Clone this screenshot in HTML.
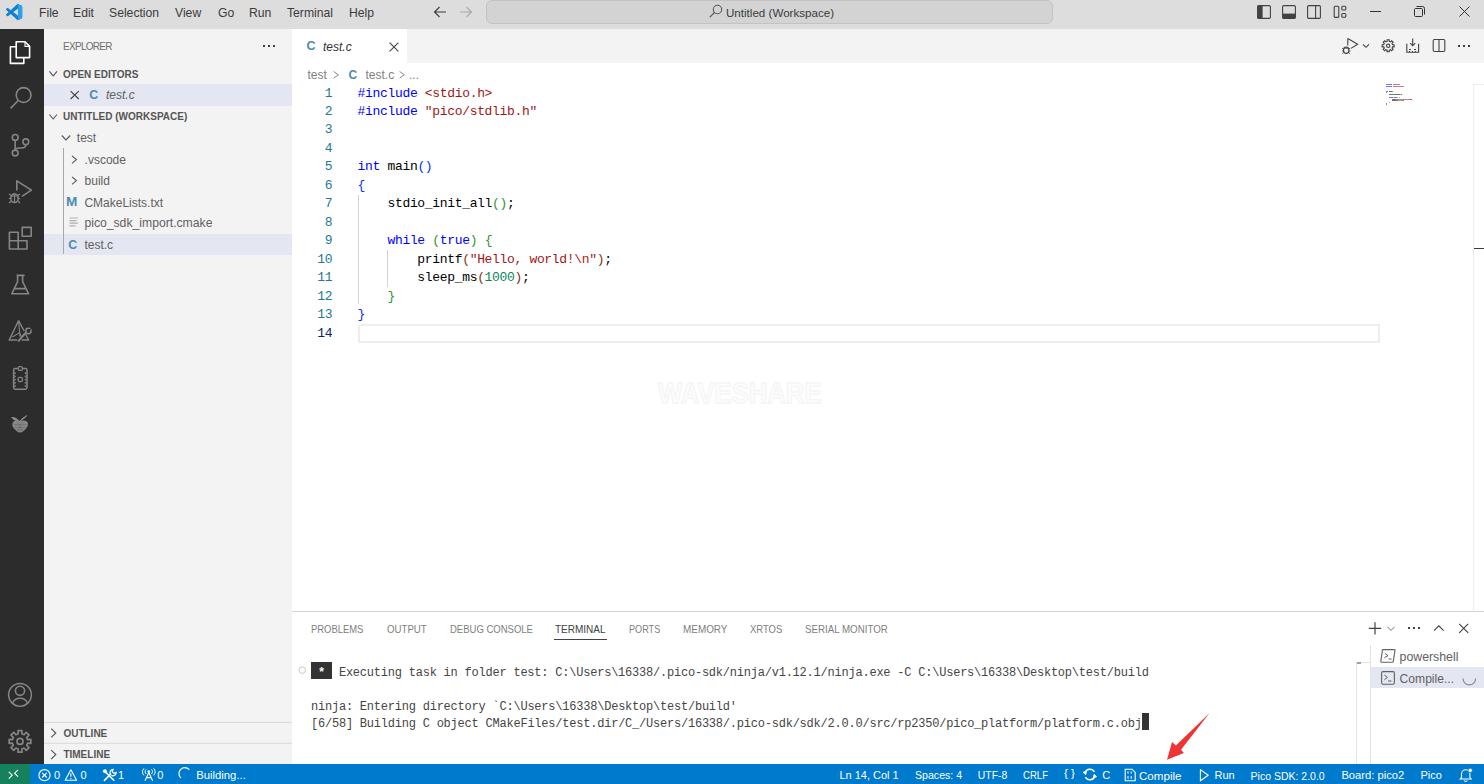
<!DOCTYPE html>
<html><head><meta charset="utf-8">
<style>
*{margin:0;padding:0;box-sizing:border-box}
html,body{width:1484px;height:784px;overflow:hidden;background:#fff;font-family:"Liberation Sans",sans-serif;position:relative}
.a{position:absolute}
.t{position:absolute;white-space:pre;line-height:1}
svg{position:absolute;overflow:visible}
.code{position:absolute;font-family:"Liberation Mono",monospace;white-space:pre;color:#000;line-height:1}
.kw{color:#0000ff}.str{color:#a31515}.num{color:#098658}.esc{color:#b01818}
.b1{color:#0431fa}.b2{color:#319331}.b3{color:#7b3814}
</style></head><body>
<div class="a" style="left:0;top:0;width:1484px;height:29px;background:#dddddd"></div>
<svg style="left:6px;top:4px" width="16.2" height="16.2" viewBox="0 0 100 100">
 <path d="M96.46 10.8L75.86.87a6.3 6.3 0 0 0-7.18 1.22L29.2 38.04 12.02 25a4.2 4.2 0 0 0-5.36.24L1.15 30.25a4.2 4.2 0 0 0 0 6.22L16.05 50 1.15 63.53a4.2 4.2 0 0 0 0 6.22l5.51 5.01a4.2 4.2 0 0 0 5.36.24l17.18-13.04 39.48 35.96a6.3 6.3 0 0 0 7.18 1.22l20.6-9.92A6.3 6.3 0 0 0 100 83.55V16.45a6.3 6.3 0 0 0-3.54-5.65zM75.02 72.7L45.11 50l29.91-22.7z" fill="#127fd0"/>
 <path d="M74.6 1.2L96.46 10.8a6.3 6.3 0 0 1 3.54 5.65V83.55a6.3 6.3 0 0 1-3.54 5.65L74.6 98.8Z" fill="#28a4ee"/>
</svg>
<div class="t" style="left:39px;top:6.87px;font-size:12.2px;color:#3b3b3b">File</div>
<div class="t" style="left:73px;top:6.87px;font-size:12.2px;color:#3b3b3b">Edit</div>
<div class="t" style="left:109px;top:6.87px;font-size:12.2px;color:#3b3b3b">Selection</div>
<div class="t" style="left:175px;top:6.87px;font-size:12.2px;color:#3b3b3b">View</div>
<div class="t" style="left:218px;top:6.87px;font-size:12.2px;color:#3b3b3b">Go</div>
<div class="t" style="left:249px;top:6.87px;font-size:12.2px;color:#3b3b3b">Run</div>
<div class="t" style="left:287px;top:6.87px;font-size:12.2px;color:#3b3b3b">Terminal</div>
<div class="t" style="left:349px;top:6.87px;font-size:12.2px;color:#3b3b3b">Help</div>
<svg style="left:433px;top:5px" width="14" height="14" viewBox="0 0 14 14"><path d="M13 7H1.5M6.5 2L1.5 7L6.5 12" stroke="#3b3b3b" stroke-width="1.1" fill="none"/></svg>
<svg style="left:459px;top:5px" width="14" height="14" viewBox="0 0 14 14"><path d="M1 7H12.5M7.5 2L12.5 7L7.5 12" stroke="#a8a8a8" stroke-width="1.1" fill="none"/></svg>
<div class="a" style="left:486px;top:0px;width:567px;height:24px;background:#d3d3d3;border:1px solid #c2c2c2;border-radius:6px"></div>
<svg style="left:709px;top:4px" width="14" height="14" viewBox="0 0 14 14"><circle cx="8.5" cy="5.5" r="4.2" stroke="#555" stroke-width="1.1" fill="none"/><path d="M5.5 8.5L0.8 13.2" stroke="#555" stroke-width="1.2"/></svg>
<div class="t" style="left:726px;top:6.58px;font-size:11.6px;color:#3b3b3b">Untitled (Workspace)</div>
<svg style="left:1257px;top:5px" width="14" height="14" viewBox="0 0 14 14"><rect x="0.6" y="0.6" width="12.8" height="12.8" rx="1.2" stroke="#424242" stroke-width="1.1" fill="none"/><rect x="0.6" y="0.6" width="5" height="12.8" fill="#424242"/></svg>
<svg style="left:1282px;top:5px" width="14" height="14" viewBox="0 0 14 14"><rect x="0.6" y="0.6" width="12.8" height="12.8" rx="1.2" stroke="#424242" stroke-width="1.1" fill="none"/><rect x="0.6" y="8.6" width="12.8" height="4.8" fill="#424242"/></svg>
<svg style="left:1307px;top:5px" width="14" height="14" viewBox="0 0 14 14"><rect x="0.6" y="0.6" width="12.8" height="12.8" rx="1.2" stroke="#424242" stroke-width="1.1" fill="none"/><path d="M8.6 0.6V13.4" stroke="#424242" stroke-width="1.1"/></svg>
<svg style="left:1333px;top:5px" width="14" height="14" viewBox="0 0 14 14"><rect x="1.2" y="1.2" width="4.6" height="11.2" rx="1" stroke="#424242" stroke-width="1.1" fill="none"/><rect x="8.8" y="1.2" width="4" height="3.8" rx="1" stroke="#424242" stroke-width="1.1" fill="none"/><rect x="8.8" y="8.5" width="4" height="3.8" rx="1" stroke="#424242" stroke-width="1.1" fill="none"/></svg>
<div class="a" style="left:1370px;top:11px;width:11px;height:1px;background:#333"></div>
<svg style="left:1414px;top:6px" width="11" height="11" viewBox="0 0 11 11"><rect x="0.5" y="2.5" width="8" height="8" rx="1" stroke="#333" stroke-width="1" fill="none"/><path d="M2.5 0.5H8.5A2 2 0 0 1 10.5 2.5V8.5" stroke="#333" stroke-width="1" fill="none"/></svg>
<svg style="left:1459px;top:6px" width="11" height="11" viewBox="0 0 11 11"><path d="M0.5 0.5L10.5 10.5M10.5 0.5L0.5 10.5" stroke="#333" stroke-width="1"/></svg>
<div class="a" style="left:0;top:29px;width:44px;height:735px;background:#2c2c2c"></div>
<!-- ACTIVITY BAR ICONS -->
<svg style="left:0;top:0" width="44" height="784" viewBox="0 0 44 784" fill="none" stroke-linejoin="round">
 <g stroke="#ffffff" stroke-width="1.6">
  <path d="M16.2 41.8H25L29.6 46.4V57.6H16.2Z"/>
  <path d="M25 41.8V46.4H29.6" stroke-width="1.1"/>
  <path d="M16.2 46.8H10.4V63.4H23.8V57.6"/>
 </g>
 <g stroke="#858585" stroke-width="1.6">
  <circle cx="23.6" cy="95" r="7.4"/>
  <path d="M18.4 100.3L10.6 108.4"/>
  <circle cx="15.2" cy="137.4" r="2.9"/>
  <circle cx="25.8" cy="141.8" r="2.9"/>
  <circle cx="15.2" cy="153" r="2.9"/>
  <path d="M15.2 140.3V150.1"/>
  <path d="M25.8 144.7C25.8 147 24 148 21.5 148H19C16.5 148 15.2 149 15.2 150.1"/>
  <path d="M16.8 190.4V180.8L31.4 190.2L21.9 196.3"/>
  <ellipse cx="14.5" cy="198.2" rx="3.7" ry="4.3"/>
  <path d="M11 196H18M9 194L11 195.5M20 194L18 195.5M8.8 198.5H10.8M18.2 198.5H20.2M9 203L11 201.2M20 203L18 201.2M14.5 195V202.5" stroke-width="1.2"/>
  <path d="M9.4 232.2H18.2V240.8H27V249H9.4Z M9.4 240.8H18.2V249"/>
  <rect x="22.2" y="227.4" width="9" height="8.8"/>
  <path d="M16.6 275.4H24.6M17.6 275.4V281.6L11.8 293.8H28.6L22.6 281.6V275.4M14.8 288.6H25.6"/>
  <path d="M18.6 320.6L9.2 340H17.2M21.8 340H28.6L25.2 333.2M18.6 320.6L24.2 331" stroke-width="1.4"/>
  <path d="M18.6 320.6L20 336.4M12.4 337L19.6 332.6L21.2 336.6" stroke-width="1.1"/>
  <path d="M18.2 341.4L25.4 333" stroke-width="2"/>
  <circle cx="28.4" cy="331" r="2.7" stroke-width="1.5"/>
  <path d="M28.6 330.8L31.4 328.4" stroke="#2c2c2c" stroke-width="1.2"/>
  <rect x="13.6" y="368.6" width="13.4" height="20.6" rx="1.6" stroke-width="1.5"/>
  <rect x="18.2" y="366.6" width="4.2" height="3.8" rx="1.4" stroke-width="1.3" fill="#2c2c2c"/>
  <rect x="18.2" y="377.4" width="4.2" height="4.2" rx="1.4" stroke-width="1.3"/>
  <path d="M14.2 372.4L15.8 373.2L14.2 374M14.2 375.6L15.8 376.4L14.2 377.2M14.2 378.8L15.8 379.6L14.2 380.4M14.2 382L15.8 382.8L14.2 383.6M14.2 385.2L15.8 386L14.2 386.8M26.4 372.4L24.8 373.2L26.4 374M26.4 375.6L24.8 376.4L26.4 377.2M26.4 378.8L24.8 379.6L26.4 380.4M26.4 382L24.8 382.8L26.4 383.6M26.4 385.2L24.8 386L26.4 386.8" stroke-width="1"/>
  <circle cx="20" cy="694.8" r="11.4" stroke-width="1.5"/>
  <circle cx="20" cy="690.8" r="4.6" stroke-width="1.6"/>
  <path d="M12.4 703.4C13.6 699.8 16.6 698.2 20 698.2S26.4 699.8 27.6 703.4" stroke-width="1.6"/>
 </g>
 <path d="M12.4 423.4C13.2 420.6 16.4 420 20 421C23.6 420 26.8 420.2 27.8 423C28.6 425.6 26.6 428.4 23.6 431C21.4 433 19 433 16.8 431.2C13.6 428.6 11.8 426 12.4 423.4Z" fill="#888"/>
 <path d="M11.2 417.2C14 416.4 17.4 418 19.6 421.4C16.6 421.6 13.4 420.4 11.2 417.2Z" fill="#8c8c8c"/>
 <path d="M26.8 415.6C24.6 418.4 22 420.2 19.6 421.4C21.6 419 24 417 26.8 415.6Z" fill="#8c8c8c" stroke="#8c8c8c" stroke-width="0.8"/>
 <path d="M14 424.6H26.4M14.6 427.6H25.4M17 430.2H23.4M17.2 421.6L22.6 431.4M23 421.6L17.6 431.4" stroke="#6a6a6a" stroke-width="0.7"/>
 <g stroke="#858585" stroke-width="1.7" fill="none">
 <path id="gear" d="M27.58 739.58L30.82 739.42L30.82 743.38L27.58 743.22L26.65 745.48L29.05 747.65L26.25 750.45L24.08 748.05L21.82 748.98L21.98 752.22L18.02 752.22L18.18 748.98L15.92 748.05L13.75 750.45L10.95 747.65L13.35 745.48L12.42 743.22L9.18 743.38L9.18 739.42L12.42 739.58L13.35 737.32L10.95 735.15L13.75 732.35L15.92 734.75L18.18 733.82L18.02 730.58L21.98 730.58L21.82 733.82L24.08 734.75L26.25 732.35L29.05 735.15L26.65 737.32Z"/>
 <circle cx="20" cy="741.4" r="3"/>
 </g>
</svg>
<div class="a" style="left:44px;top:29px;width:248px;height:735px;background:#f3f3f3"></div>
<div class="a" style="left:44px;top:84px;width:248px;height:22px;background:#e4e6f1"></div>
<div class="a" style="left:44px;top:234px;width:248px;height:21px;background:#e4e6f1"></div>
<div class="t" style="left:63px;top:41.83px;font-size:10px;letter-spacing:-0.7px;color:#6f6f6f">EXPLORER</div>
<div class="a" style="left:263px;top:45px;width:2px;height:2px;background:#424242"></div>
<div class="a" style="left:268px;top:45px;width:2px;height:2px;background:#424242"></div>
<div class="a" style="left:273px;top:45px;width:2px;height:2px;background:#424242"></div>
<svg style="left:44px;top:29px" width="248" height="735" viewBox="44 29 248 735" fill="none">
 <g stroke="#555" stroke-width="1.1">
  <path d="M49.4 71.3L53.2 75.8L57 71.3"/>
  <path d="M49.4 114.5L53.2 119L57 114.5"/>
  <path d="M61.8 135.5L66 140L70.2 135.5"/>
  <path d="M72 155.8L76.4 159.6L72 163.4"/>
  <path d="M72 176.8L76.4 180.6L72 184.4"/>
  <path d="M51.2 728.6L55.8 733L51.2 737.4"/>
  <path d="M51.2 750.2L55.8 754.6L51.2 759"/>
  <path d="M70.6 91.2L78.8 99M78.8 91.2L70.6 99" stroke="#424242"/>
 </g>
 <path d="M44 722.4H292M44 743.3H292" stroke="#d9d9d9" stroke-width="1"/>
</svg>
<div class="t" style="left:63px;top:69.83px;font-size:10px;font-weight:bold;color:#555">OPEN EDITORS</div>
<div class="t" style="left:89.3px;top:89.09px;font-size:12.3px;font-weight:bold;color:#4d8bb0">C</div>
<div class="t" style="left:106px;top:89.24px;font-size:12px;font-style:italic;color:#616161">test.c</div>
<div class="t" style="left:63px;top:112.03px;font-size:10px;font-weight:bold;color:#555">UNTITLED (WORKSPACE)</div>
<div class="t" style="left:76.8px;top:131.94px;font-size:12px;color:#616161">test</div>
<div class="t" style="left:84.6px;top:153.94px;font-size:12px;color:#616161">.vscode</div>
<div class="t" style="left:84.6px;top:175.04px;font-size:12px;color:#616161">build</div>
<div class="t" style="left:84.4px;top:196.74px;font-size:12px;color:#616161">CMakeLists.txt</div>
<div class="t" style="left:84.4px;top:217.37px;font-size:12.2px;color:#616161">pico_sdk_import.cmake</div>
<div class="t" style="left:84.4px;top:238.94px;font-size:12px;color:#616161">test.c</div>
<div class="a" style="left:63px;top:148px;width:1px;height:106px;background:#a8a8a8"></div>
<div class="t" style="left:66.0px;top:196.03px;font-size:12.6px;font-weight:bold;color:#4d8bb0;transform:scaleX(1.08);transform-origin:left">M</div>
<svg style="left:69px;top:217px" width="10" height="11" viewBox="0 0 10 11"><path d="M0.5 1H9M0.5 3.6H7.5M0.5 6.2H9M0.5 8.8H6.5" stroke="#b0b0b0" stroke-width="1.2"/></svg>
<div class="t" style="left:68.3px;top:238.69px;font-size:12.3px;font-weight:bold;color:#4d8bb0">C</div>
<div class="t" style="left:63.4px;top:728.83px;font-size:10px;font-weight:bold;color:#555">OUTLINE</div>
<div class="t" style="left:63.4px;top:750.24px;font-size:10px;font-weight:bold;color:#555">TIMELINE</div>
<div class="a" style="left:292px;top:29px;width:1192px;height:34px;background:#f3f3f3"></div>
<div class="a" style="left:292px;top:29px;width:115px;height:34px;background:#fff"></div>
<div class="t" style="left:306.5px;top:39.92px;font-size:12.5px;font-weight:bold;color:#4d8bb0">C</div>
<div class="t" style="left:323px;top:40.54px;font-size:12px;font-style:italic;color:#333">test.c</div>
<svg style="left:389px;top:41.5px" width="10" height="10" viewBox="0 0 10 10"><path d="M0.6 0.6L9.4 9.4M9.4 0.6L0.6 9.4" stroke="#424242" stroke-width="1.1"/></svg>
<svg style="left:1330px;top:30px" width="154" height="33" viewBox="1330 30 154 33" fill="none" stroke="#424242" stroke-width="1.1">
 <path d="M1347.8 38.6V45.5M1347.8 38.6L1357.6 44.2L1351 48.4"/>
 <ellipse cx="1346.2" cy="50.2" rx="2.7" ry="3.2"/>
 <path d="M1342.2 48.3L1343.6 49M1350.2 48.3L1348.8 49M1342 51H1343.5M1350.4 51H1348.9M1342.4 53.6L1343.7 52.7M1350 53.6L1348.7 52.7M1343.8 48.2H1348.6" stroke-width="0.9"/>
 <path d="M1363 44.3L1366 47.3L1369 44.3"/>
 <path d="M1392.53 44.75L1394.15 44.70L1394.15 46.90L1392.53 46.85L1391.99 48.15L1393.17 49.27L1391.62 50.82L1390.50 49.64L1389.20 50.18L1389.25 51.80L1387.05 51.80L1387.10 50.18L1385.80 49.64L1384.68 50.82L1383.13 49.27L1384.31 48.15L1383.77 46.85L1382.15 46.90L1382.15 44.70L1383.77 44.75L1384.31 43.45L1383.13 42.33L1384.68 40.78L1385.80 41.96L1387.10 41.42L1387.05 39.80L1389.25 39.80L1389.20 41.42L1390.50 41.96L1391.62 40.78L1393.17 42.33L1391.99 43.45Z"/>
 <circle cx="1388.15" cy="45.8" r="1.7"/>
 <path d="M1406.8 43.8V52.3H1418.6V43.8"/>
 <path d="M1412.7 38.4V45.6M1410.2 43.2L1412.7 45.8L1415.2 43.2"/>
 <rect x="1433.2" y="39.5" width="11.6" height="12" rx="1.2"/>
 <path d="M1439 39.5V51.5"/>
</svg>
<div class="a" style="left:1409px;top:48.5px;width:1.6px;height:1.6px;background:#424242"></div>
<div class="a" style="left:1414.4px;top:48.5px;width:1.6px;height:1.6px;background:#424242"></div>
<div class="a" style="left:1411.7px;top:50.6px;width:1.6px;height:1.6px;background:#424242"></div>
<div class="a" style="left:1408.6px;top:50.6px;width:1.6px;height:1.6px;background:#424242"></div>
<div class="a" style="left:1414.8px;top:50.6px;width:1.6px;height:1.6px;background:#424242"></div>
<div class="a" style="left:1458px;top:45px;width:2px;height:2px;background:#424242"></div>
<div class="a" style="left:1463px;top:45px;width:2px;height:2px;background:#424242"></div>
<div class="a" style="left:1468px;top:45px;width:2px;height:2px;background:#424242"></div>
<div class="t" style="left:307.4px;top:68.94px;font-size:12px;color:#808080">test</div>
<svg style="left:333px;top:71px" width="7" height="8" viewBox="0 0 7 8"><path d="M0.6 0.5L5.4 3.8L0.6 7.1" stroke="#8a8a8a" stroke-width="1" fill="none"/></svg>
<div class="t" style="left:348.4px;top:68.54px;font-size:12px;font-weight:bold;color:#4d8bb0">C</div>
<div class="t" style="left:365.5px;top:68.94px;font-size:12px;color:#808080">test.c</div>
<svg style="left:399px;top:71px" width="7" height="8" viewBox="0 0 7 8"><path d="M0.6 0.5L5.4 3.8L0.6 7.1" stroke="#8a8a8a" stroke-width="1" fill="none"/></svg>
<div class="t" style="left:409px;top:68.94px;font-size:12px;color:#808080">...</div>
<div class="a" style="left:358px;top:324px;width:1022px;height:18.5px;border:2px solid #eeeeee"></div>
<div class="a" style="left:358px;top:195px;width:1px;height:109px;background:#d3d3d3"></div>
<div class="a" style="left:387px;top:250px;width:1px;height:37px;background:#d3d3d3"></div>
<div class="code" style="left:324.73px;top:86.53px;font-size:13px;letter-spacing:-0.331px;color:#237893">1</div>
<div class="code" style="left:357.6px;top:86.53px;font-size:13px;letter-spacing:-0.331px"><span class="kw">#include</span> <span class="str">&lt;stdio.h&gt;</span></div>
<div class="code" style="left:324.73px;top:105.0px;font-size:13px;letter-spacing:-0.331px;color:#237893">2</div>
<div class="code" style="left:357.6px;top:105.0px;font-size:13px;letter-spacing:-0.331px"><span class="kw">#include</span> <span class="str">"pico/stdlib.h"</span></div>
<div class="code" style="left:324.73px;top:123.46px;font-size:13px;letter-spacing:-0.331px;color:#237893">3</div>
<div class="code" style="left:324.73px;top:141.91px;font-size:13px;letter-spacing:-0.331px;color:#237893">4</div>
<div class="code" style="left:324.73px;top:160.38px;font-size:13px;letter-spacing:-0.331px;color:#237893">5</div>
<div class="code" style="left:357.6px;top:160.38px;font-size:13px;letter-spacing:-0.331px"><span class="kw">int</span> main<span class="b1">()</span></div>
<div class="code" style="left:324.73px;top:178.84px;font-size:13px;letter-spacing:-0.331px;color:#237893">6</div>
<div class="code" style="left:357.6px;top:178.84px;font-size:13px;letter-spacing:-0.331px"><span class="b1">{</span></div>
<div class="code" style="left:324.73px;top:197.29px;font-size:13px;letter-spacing:-0.331px;color:#237893">7</div>
<div class="code" style="left:357.6px;top:197.29px;font-size:13px;letter-spacing:-0.331px">    stdio_init_all<span class="b2">()</span>;</div>
<div class="code" style="left:324.73px;top:215.75px;font-size:13px;letter-spacing:-0.331px;color:#237893">8</div>
<div class="code" style="left:324.73px;top:234.22px;font-size:13px;letter-spacing:-0.331px;color:#237893">9</div>
<div class="code" style="left:357.6px;top:234.22px;font-size:13px;letter-spacing:-0.331px">    <span class="kw">while</span> <span class="b2">(</span><span class="kw">true</span><span class="b2">)</span> <span class="b2">{</span></div>
<div class="code" style="left:317.26px;top:252.67px;font-size:13px;letter-spacing:-0.331px;color:#237893">10</div>
<div class="code" style="left:357.6px;top:252.67px;font-size:13px;letter-spacing:-0.331px">        printf<span class="b3">(</span><span class="str">"Hello, world!</span><span class="esc">\n</span><span class="str">"</span><span class="b3">)</span>;</div>
<div class="code" style="left:317.26px;top:271.14px;font-size:13px;letter-spacing:-0.331px;color:#237893">11</div>
<div class="code" style="left:357.6px;top:271.14px;font-size:13px;letter-spacing:-0.331px">        sleep_ms<span class="b3">(</span><span class="num">1000</span><span class="b3">)</span>;</div>
<div class="code" style="left:317.26px;top:289.6px;font-size:13px;letter-spacing:-0.331px;color:#237893">12</div>
<div class="code" style="left:357.6px;top:289.6px;font-size:13px;letter-spacing:-0.331px">    <span class="b2">}</span></div>
<div class="code" style="left:317.26px;top:308.06px;font-size:13px;letter-spacing:-0.331px;color:#237893">13</div>
<div class="code" style="left:357.6px;top:308.06px;font-size:13px;letter-spacing:-0.331px"><span class="b1">}</span></div>
<div class="code" style="left:317.26px;top:326.52px;font-size:13px;letter-spacing:-0.331px;color:#0b216f">14</div>
<div class="a" style="left:1385.7px;top:84.2px;width:6.16px;height:1.3px;background:#0000ff;opacity:0.55"></div>
<div class="a" style="left:1392.63px;top:84.2px;width:6.93px;height:1.3px;background:#a31515;opacity:0.55"></div>
<div class="a" style="left:1385.7px;top:85.8px;width:6.16px;height:1.3px;background:#0000ff;opacity:0.55"></div>
<div class="a" style="left:1392.63px;top:85.8px;width:11.55px;height:1.3px;background:#a31515;opacity:0.55"></div>
<div class="a" style="left:1385.7px;top:90.6px;width:2.31px;height:1.3px;background:#0000ff;opacity:0.55"></div>
<div class="a" style="left:1388.78px;top:90.6px;width:3.08px;height:1.3px;background:#000;opacity:0.55"></div>
<div class="a" style="left:1391.86px;top:90.6px;width:1.54px;height:1.3px;background:#0431fa;opacity:0.55"></div>
<div class="a" style="left:1385.7px;top:92.2px;width:0.77px;height:1.3px;background:#0431fa;opacity:0.55"></div>
<div class="a" style="left:1388.78px;top:93.8px;width:10.78px;height:1.3px;background:#000;opacity:0.55"></div>
<div class="a" style="left:1399.56px;top:93.8px;width:1.54px;height:1.3px;background:#319331;opacity:0.55"></div>
<div class="a" style="left:1401.1px;top:93.8px;width:0.77px;height:1.3px;background:#000;opacity:0.55"></div>
<div class="a" style="left:1388.78px;top:97.0px;width:3.85px;height:1.3px;background:#0000ff;opacity:0.55"></div>
<div class="a" style="left:1393.4px;top:97.0px;width:0.77px;height:1.3px;background:#319331;opacity:0.55"></div>
<div class="a" style="left:1394.17px;top:97.0px;width:3.08px;height:1.3px;background:#0000ff;opacity:0.55"></div>
<div class="a" style="left:1397.25px;top:97.0px;width:0.77px;height:1.3px;background:#319331;opacity:0.55"></div>
<div class="a" style="left:1398.79px;top:97.0px;width:0.77px;height:1.3px;background:#319331;opacity:0.55"></div>
<div class="a" style="left:1391.86px;top:98.6px;width:4.62px;height:1.3px;background:#000;opacity:0.55"></div>
<div class="a" style="left:1396.48px;top:98.6px;width:0.77px;height:1.3px;background:#7b3814;opacity:0.55"></div>
<div class="a" style="left:1397.25px;top:98.6px;width:5.39px;height:1.3px;background:#a31515;opacity:0.55"></div>
<div class="a" style="left:1403.41px;top:98.6px;width:4.62px;height:1.3px;background:#a31515;opacity:0.55"></div>
<div class="a" style="left:1408.03px;top:98.6px;width:1.54px;height:1.3px;background:#ee0000;opacity:0.55"></div>
<div class="a" style="left:1409.57px;top:98.6px;width:0.77px;height:1.3px;background:#a31515;opacity:0.55"></div>
<div class="a" style="left:1410.34px;top:98.6px;width:0.77px;height:1.3px;background:#7b3814;opacity:0.55"></div>
<div class="a" style="left:1411.11px;top:98.6px;width:0.77px;height:1.3px;background:#000;opacity:0.55"></div>
<div class="a" style="left:1391.86px;top:100.2px;width:6.16px;height:1.3px;background:#000;opacity:0.55"></div>
<div class="a" style="left:1398.02px;top:100.2px;width:0.77px;height:1.3px;background:#7b3814;opacity:0.55"></div>
<div class="a" style="left:1398.79px;top:100.2px;width:3.08px;height:1.3px;background:#098658;opacity:0.55"></div>
<div class="a" style="left:1401.87px;top:100.2px;width:0.77px;height:1.3px;background:#7b3814;opacity:0.55"></div>
<div class="a" style="left:1402.64px;top:100.2px;width:0.77px;height:1.3px;background:#000;opacity:0.55"></div>
<div class="a" style="left:1388.78px;top:101.8px;width:0.77px;height:1.3px;background:#319331;opacity:0.55"></div>
<div class="a" style="left:1385.7px;top:103.4px;width:0.77px;height:1.3px;background:#0431fa;opacity:0.55"></div>
<div class="a" style="left:1473px;top:84px;width:1px;height:527px;background:#ededed"></div>
<div class="a" style="left:1473px;top:84px;width:11px;height:1px;background:#ededed"></div>
<div class="a" style="left:1474px;top:247.6px;width:10px;height:1.6px;background:#3c3c3c"></div>
<div class="t" style="left:657.5px;top:378.95px;font-size:29px;font-weight:bold;color:#fdfdfd;-webkit-text-stroke:1.4px #f5f5f5;transform:scaleX(0.885);transform-origin:left">WAVESHARE</div>
<div class="a" style="left:292px;top:611px;width:1192px;height:1px;background:#d6d6d6"></div>
<div class="t" style="left:311.2px;top:623.99px;font-size:11px;color:#808080;transform:scaleX(0.855);transform-origin:left">PROBLEMS</div>
<div class="t" style="left:386.5px;top:623.99px;font-size:11px;color:#808080;transform:scaleX(0.879);transform-origin:left">OUTPUT</div>
<div class="t" style="left:449.9px;top:623.99px;font-size:11px;color:#808080;transform:scaleX(0.864);transform-origin:left">DEBUG CONSOLE</div>
<div class="t" style="left:555.4px;top:623.99px;font-size:11px;color:#424242;transform:scaleX(0.909);transform-origin:left">TERMINAL</div>
<div class="t" style="left:628.9px;top:623.99px;font-size:11px;color:#808080;transform:scaleX(0.83);transform-origin:left">PORTS</div>
<div class="t" style="left:682.7px;top:623.99px;font-size:11px;color:#808080;transform:scaleX(0.902);transform-origin:left">MEMORY</div>
<div class="t" style="left:750.2px;top:623.99px;font-size:11px;color:#808080;transform:scaleX(0.86);transform-origin:left">XRTOS</div>
<div class="t" style="left:805.2px;top:623.99px;font-size:11px;color:#808080;transform:scaleX(0.885);transform-origin:left">SERIAL MONITOR</div>
<div class="a" style="left:554px;top:638.5px;width:53px;height:1.2px;background:#424242"></div>
<svg style="left:1360px;top:615px" width="124" height="30" viewBox="1360 615 124 30" fill="none" stroke="#424242" stroke-width="1.1">
 <path d="M1375 622.2V634.6M1368.8 628.4H1381.2" stroke-width="1.2"/>
 <path d="M1387.5 626.8L1391 630.4L1394.5 626.8" stroke="#777" stroke-width="1"/>
 <path d="M1434 630.6L1438.8 625.8L1443.6 630.6"/>
 <path d="M1459.2 623.8L1468.2 632.8M1468.2 623.8L1459.2 632.8"/>
</svg>
<div class="a" style="left:1407.6px;top:627.4px;width:2px;height:2px;background:#424242"></div>
<div class="a" style="left:1412.6px;top:627.4px;width:2px;height:2px;background:#424242"></div>
<div class="a" style="left:1417.6px;top:627.4px;width:2px;height:2px;background:#424242"></div>
<div class="a" style="left:311px;top:662px;width:21px;height:17px;background:#333"></div>
<svg style="left:298px;top:666px" width="9" height="9" viewBox="0 0 9 9"><circle cx="4.3" cy="4.1" r="3.3" stroke="#c8c8c8" stroke-width="1" fill="none"/></svg>
<div class="code" style="left:317.98px;top:667.0px;font-size:12px;letter-spacing:-0.221px;color:#454545;color:#fff;font-weight:bold">*</div>
<div class="code" style="left:338.92px;top:666.7px;font-size:12px;letter-spacing:-0.221px;color:#454545;">Executing task in folder test: C:\Users\16338/.pico-sdk/ninja/v1.12.1/ninja.exe -C C:\Users\16338\Desktop\test/build</div>
<div class="code" style="left:311.0px;top:701.2px;font-size:12px;letter-spacing:-0.221px;color:#454545;">ninja: Entering directory `C:\Users\16338\Desktop\test/build'</div>
<div class="code" style="left:311.0px;top:717.7px;font-size:12px;letter-spacing:-0.221px;color:#454545;">[6/58] Building C object CMakeFiles/test.dir/C_/Users/16338/.pico-sdk/sdk/2.0.0/src/rp2350/pico_platform/platform.c.obj</div>
<div class="a" style="left:1142px;top:713.3px;width:6.8px;height:16.4px;background:#333"></div>
<div class="a" style="left:1356px;top:661.5px;width:1px;height:102.5px;background:#e6e6e6"></div>
<div class="a" style="left:1356px;top:661.5px;width:14px;height:1px;background:#e6e6e6"></div>
<div class="a" style="left:1357px;top:661.8px;width:3.8px;height:2.4px;background:#a0a0a0"></div>
<div class="a" style="left:1370px;top:645.4px;width:1px;height:118.6px;background:#e3e3e3"></div>
<div class="a" style="left:1371px;top:667px;width:113px;height:20.5px;background:#e4e6f1"></div>
<svg style="left:1378px;top:647px" width="20" height="40" viewBox="1378 647 20 40" fill="none" stroke="#616161" stroke-width="1.1">
 <path d="M1383 649.6H1394.4Q1395.2 649.6 1395 650.4L1393.2 661.6Q1393 662.2 1392.4 662.2H1381.4Q1380.6 662.2 1380.8 661.4L1382.4 650.2Q1382.5 649.6 1383 649.6Z"/>
 <path d="M1384.8 653.4L1388 655.6L1384.4 657.8M1388.4 659H1391.6" stroke-width="1"/>
 <rect x="1381.6" y="671.6" width="12.8" height="12.6" rx="1.4"/>
 <path d="M1384.4 675L1387.4 677.4L1384.4 679.8M1388 681H1391.4" stroke-width="1"/>
</svg>
<div class="t" style="left:1399.6px;top:650.69px;font-size:12.3px;color:#616161">powershell</div>
<div class="t" style="left:1399.6px;top:672.76px;font-size:12.1px;color:#616161">Compile...</div>
<svg style="left:1460px;top:670px" width="20" height="20" viewBox="0 0 20 20"><path d="M3 8.6A6.3 6.3 0 0 0 15.6 8.6" stroke="#8a8a8a" stroke-width="1.2" fill="none"/></svg>
<svg style="left:1160px;top:705px" width="60" height="60" viewBox="1160 705 60 60"><path d="M1209.6 713 L1181 749.8 L1183.9 753 L1167 759.8 L1172 742 L1175.9 745.6 Z" fill="#f03434"/></svg>
<div class="a" style="left:0;top:764px;width:1484px;height:20px;background:#007acc"></div>
<div class="a" style="left:0;top:764px;width:30px;height:20px;background:#16825d"></div>
<svg style="left:0;top:764px" width="1484" height="20" viewBox="0 764 1484 20" fill="none" stroke="#fff" stroke-width="1.1">
 <path d="M8.8 771.8L12.2 775.2L8.8 778.6M18 769.8L14.6 773.2L18 776.6"/>
 <circle cx="44.5" cy="775.2" r="5.6"/>
 <path d="M42.2 772.9L46.8 777.5M46.8 772.9L42.2 777.5"/>
 <path d="M70.9 769.8L76.6 780.2H65.2Z" stroke-linejoin="round"/>
 <path d="M70.9 773.2V776.8M70.9 778.1V778.9"/>
 <path d="M104.2 770.8L113.8 780.2" stroke-width="1.6" stroke-linecap="round"/>
 <path d="M103.4 770.2L105.6 769.4L107 771.6L105.4 773L103.2 772Z" fill="#fff" stroke-width="0.6"/>
 <path d="M104.4 780.4L110.6 774.2" stroke-width="1.6" stroke-linecap="round"/>
 <path d="M110.4 774.4A3.3 3.3 0 0 1 113.2 769.4L112.2 771.8L114 773.4L116.2 772.4A3.3 3.3 0 0 1 111.4 775.4" stroke-width="1.2" fill="none"/>
 <path d="M148.8 772.6L145 780.8M148.8 772.6L152.6 780.8M146.4 777.6H151.2" stroke-width="1.1"/>
 <circle cx="148.8" cy="771.6" r="1.3" fill="#fff" stroke="none"/>
 <path d="M146.2 769.4A3 3 0 0 0 146.2 774M151.4 769.4A3 3 0 0 1 151.4 774M144 768.4A5.2 5.2 0 0 0 144 775.4M153.6 768.4A5.2 5.2 0 0 1 153.6 775.4" stroke-width="1"/>
 <path d="M189 769.4A5.3 5.3 0 0 0 180.6 777.6" stroke-width="1.2" stroke-linecap="round"/>
 <path d="M1085 772.6A5.2 5.2 0 0 1 1094.4 771.8" stroke-width="1.4"/>
 <path d="M1094.8 776.4A5.2 5.2 0 0 1 1085.4 777.2" stroke-width="1.4"/>
 <path d="M1083.2 772.2L1086.6 771.2L1085.6 774.8Z" fill="#fff" stroke-width="0.8"/>
 <path d="M1096.6 776.8L1093.2 777.8L1094.2 774.2Z" fill="#fff" stroke-width="0.8"/>
 <path d="M1125.2 769.2H1132L1135.2 772.4V780.8H1125.2Z" stroke-width="1.1"/>
 <path d="M1128 771.4V773.6M1131.2 771.4V773.6M1128 776V778.8M1131.2 776V778.8" stroke-width="1"/>
 <path d="M1200.4 769.6L1208.2 775.2L1200.4 780.8Z" stroke-linejoin="round"/>
 <path d="M1461.5 777.5V774A4.2 4.2 0 0 1 1469.9 774V777.5L1471.2 779H1460.2Z M1464.2 780.4A1.6 1.6 0 0 0 1467.2 780.4" stroke-width="1.1"/>
 <circle cx="1470.2" cy="770.4" r="2.2" fill="#fff" stroke="#007acc" stroke-width="0.8"/>
</svg>
<div class="t" style="left:54px;top:770.09px;font-size:11px;color:#fff;">0</div>
<div class="t" style="left:80.6px;top:770.09px;font-size:11px;color:#fff;">0</div>
<div class="t" style="left:118px;top:770.09px;font-size:11px;color:#fff;">1</div>
<div class="t" style="left:157.3px;top:770.09px;font-size:11px;color:#fff;">0</div>
<div class="t" style="left:196.2px;top:769.83px;font-size:11.3px;color:#fff;">Building...</div>
<div class="t" style="left:839.4px;top:770.09px;font-size:11px;color:#fff;">Ln 14, Col 1</div>
<div class="t" style="left:915px;top:770.43px;font-size:10.6px;color:#fff;">Spaces: 4</div>
<div class="t" style="left:977.8px;top:770.6px;font-size:10.4px;color:#fff;">UTF-8</div>
<div class="t" style="left:1023.4px;top:770.09px;font-size:11px;color:#fff;transform:scaleX(0.87);transform-origin:left">CRLF</div>
<div class="t" style="left:1064px;top:768.47px;font-size:11.5px;color:#fff;">{ }</div>
<div class="t" style="left:1102.3px;top:770.09px;font-size:11px;color:#fff;">C</div>
<div class="t" style="left:1139px;top:769.58px;font-size:11.6px;color:#fff;">Compile</div>
<div class="t" style="left:1214.5px;top:770.09px;font-size:11px;color:#fff;">Run</div>
<div class="t" style="left:1250.6px;top:770.51px;font-size:10.5px;color:#fff;">Pico SDK: 2.0.0</div>
<div class="t" style="left:1341.4px;top:769.92px;font-size:11.2px;color:#fff;">Board: pico2</div>
<div class="t" style="left:1420.4px;top:770.09px;font-size:11px;color:#fff;">Pico</div>
</body></html>
